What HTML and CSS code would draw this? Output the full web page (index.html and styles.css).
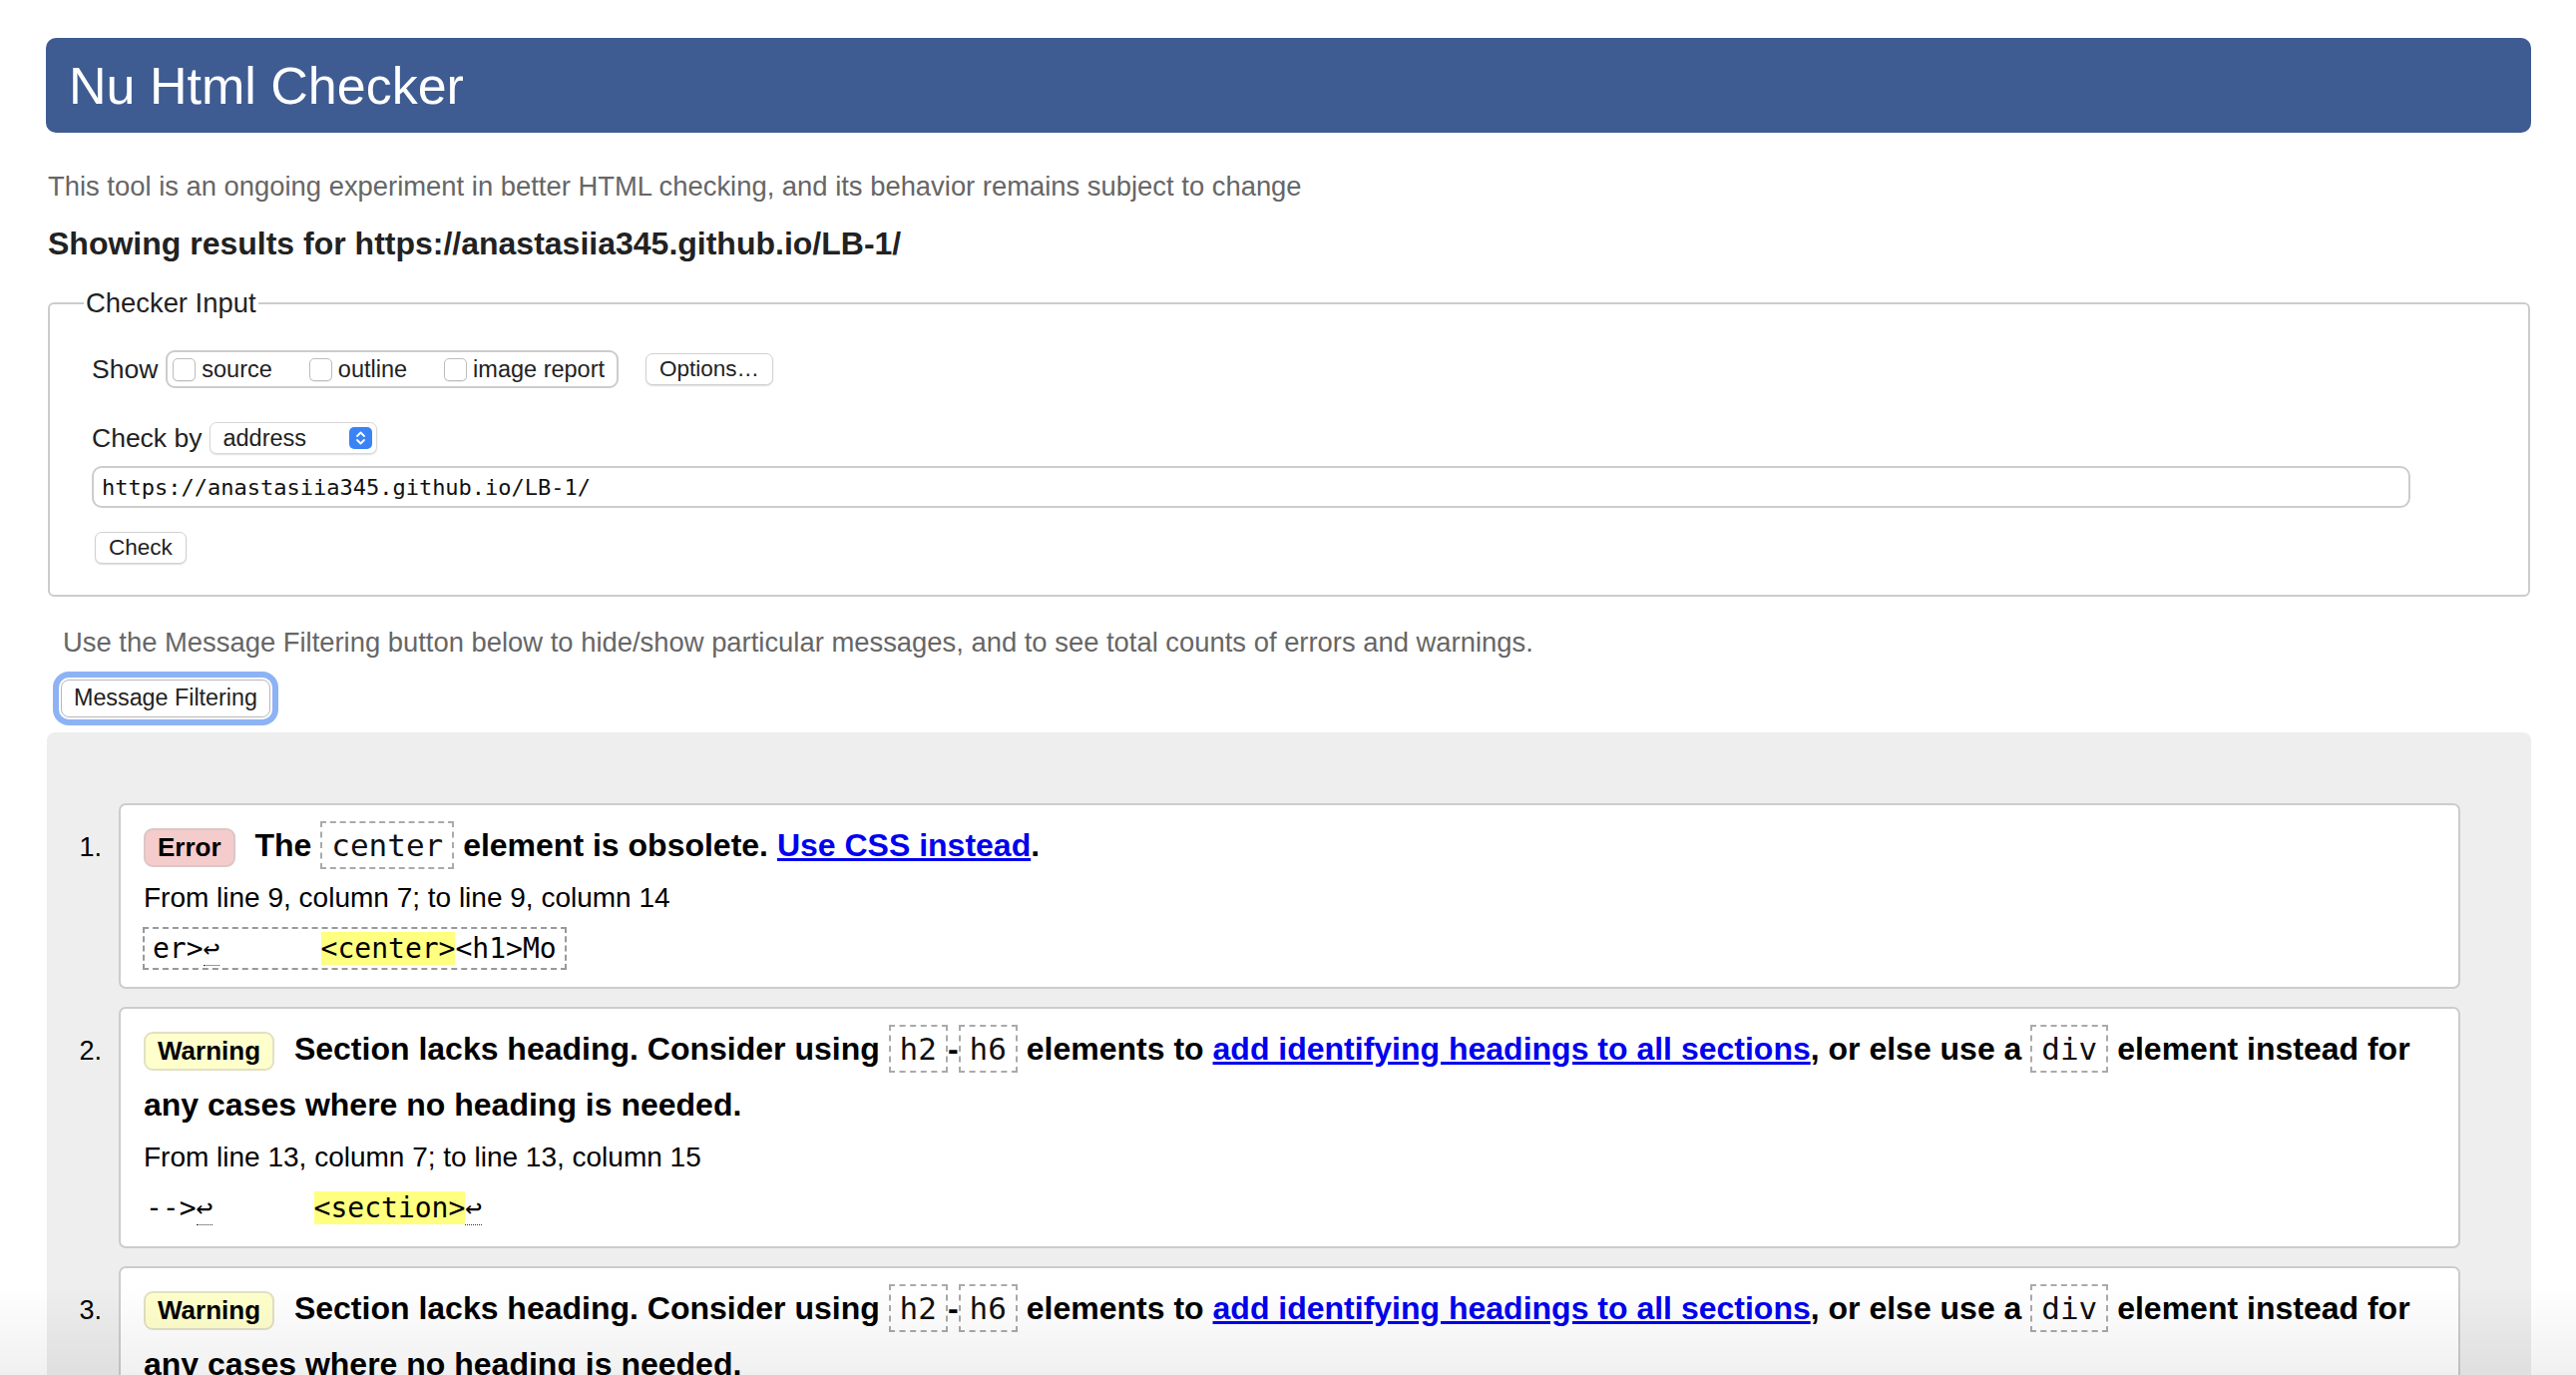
FILE: index.html
```html
<!DOCTYPE html>
<html lang="en">
<head>
<meta charset="utf-8">
<title>Nu Html Checker</title>
<link rel="stylesheet" href="styles.css">
</head>
<body>
<header class="banner"><h1 class="title">Nu Html Checker</h1></header>
<p class="intro">This tool is an ongoing experiment in better HTML checking, and its behavior remains subject to change</p>
<h2 class="results-for">Showing results for https://anastasiia345.github.io/LB-1/</h2>
<form class="checker-form">
  <fieldset class="checker">
    <legend>Checker Input</legend>
    <div class="fs-body">
      <div class="row">
        <span class="label">Show</span>
        <span class="group">
          <label class="opt"><input type="checkbox" class="cb">source</label>
          <label class="opt"><input type="checkbox" class="cb">outline</label>
          <label class="opt"><input type="checkbox" class="cb">image report</label>
        </span>
        <button type="button" class="btn btn-options">Options…</button>
      </div>
      <div class="row row-check">
        <span class="label">Check by</span>
        <span class="select"><span class="select-text">address</span><svg class="stepper" width="23" height="22" viewBox="0 0 23 22"><rect width="23" height="22" rx="5" fill="#3a83f6"/><path d="M8 9 L11.5 5.5 L15 9 M8 13 L11.5 16.5 L15 13" fill="none" stroke="#fff" stroke-width="1.8" stroke-linecap="round" stroke-linejoin="round"/></svg></span>
      </div>
      <input class="url" type="url" value="https://anastasiia345.github.io/LB-1/" readonly>
      <button type="button" class="btn btn-check">Check</button>
    </div>
  </fieldset>
</form>
<p class="filter-note">Use the Message Filtering button below to hide/show particular messages, and to see total counts of errors and warnings.</p>
<button type="button" class="btn btn-filter">Message Filtering</button>
<section class="results">
  <ol class="messages">
    <li class="item">
      <span class="num">1.</span>
      <div class="msg-box">
        <p class="msg"><strong class="badge badge-error">Error</strong> The <code>center</code> element is obsolete. <a href="#">Use CSS instead</a>.</p>
        <p class="loc">From line 9, column 7; to line 9, column 14</p>
        <p class="extract extract-boxed"><code>er&gt;<span class="lf">↩</span>      <mark>&lt;center&gt;</mark>&lt;h1&gt;Mo</code></p>
      </div>
    </li>
    <li class="item">
      <span class="num">2.</span>
      <div class="msg-box">
        <p class="msg"><strong class="badge badge-warning">Warning</strong> Section lacks heading. Consider using <code>h2</code>-<code>h6</code> elements to <a href="#">add identifying headings to all sections</a>, or else use a <code>div</code> element instead for any cases where no heading is needed.</p>
        <p class="loc">From line 13, column 7; to line 13, column 15</p>
        <p class="extract"><code>--&gt;<span class="lf">↩</span>      <mark>&lt;section&gt;</mark><span class="lf">↩</span></code></p>
      </div>
    </li>
    <li class="item">
      <span class="num">3.</span>
      <div class="msg-box">
        <p class="msg"><strong class="badge badge-warning">Warning</strong> Section lacks heading. Consider using <code>h2</code>-<code>h6</code> elements to <a href="#">add identifying headings to all sections</a>, or else use a <code>div</code> element instead for any cases where no heading is needed.</p>
        <p class="loc">From line 15, column 7; to line 15, column 15</p>
        <p class="extract"><code>--&gt;<span class="lf">↩</span>      <mark>&lt;section&gt;</mark><span class="lf">↩</span></code></p>
      </div>
    </li>
  </ol>
</section>
<div class="fade"></div>
</body>
</html>
```

FILE: styles.css
```css
* { box-sizing: border-box; }

html {
  overflow: hidden;
  background: #fff;
}

body {
  margin: 0;
  padding: 38px 45px 0 46px;
  font-family: "Liberation Sans", Arial, Helvetica, sans-serif;
  font-size: 28px;
  color: #000;
  background: #fff;
}

.banner {
  height: 95px;
  background: #3e5c92;
  border-radius: 10px;
  display: flex;
  align-items: center;
  padding-left: 23px;
}

.title {
  margin: 0;
  font-size: 52px;
  font-weight: normal;
  line-height: 1;
  color: #fff;
}

.intro {
  margin: 38px 0 0 2px;
  font-size: 27.4px;
  line-height: 32px;
  color: #666;
}

.results-for {
  margin: 23px 0 0 2px;
  font-size: 32px;
  line-height: 37px;
  font-weight: bold;
  color: #222;
}

.checker-form {
  margin: 25px 1px 0 2px;
}

.checker {
  margin: 0;
  min-width: 0;
  border: 2px solid #ccc;
  border-radius: 6px;
  padding: 31px 42px 31px 42px;
}

.checker legend {
  margin-left: -8px;
  padding: 0 2px;
  font-size: 27.4px;
  line-height: 32px;
  color: #222;
}

.fs-body {
  display: flex;
  flex-direction: column;
  align-items: flex-start;
}

.row {
  display: flex;
  align-items: center;
  height: 38px;
}

.row-check {
  margin-top: 31px;
}

.label {
  font-size: 26.5px;
  color: #222;
  margin-right: 8px;
}

.group {
  display: flex;
  align-items: center;
  gap: 37px;
  height: 38px;
  border: 2px solid #ccc;
  border-radius: 9px;
  padding: 0 12px 0 5px;
}

.opt {
  display: flex;
  align-items: center;
  font-size: 23.5px;
  color: #222;
}

.cb {
  appearance: none;
  -webkit-appearance: none;
  width: 23px;
  height: 23px;
  margin: 0 6px 0 0;
  border: 1px solid #bdbdbd;
  border-radius: 5px;
  background: #fff;
  box-shadow: 0 1px 1px rgba(0, 0, 0, 0.08);
}

.btn {
  font-family: "Liberation Sans", Arial, Helvetica, sans-serif;
  font-size: 22.5px;
  color: #222;
  background: #fff;
  border: 1px solid #d2d2d2;
  border-radius: 7px;
  box-shadow: 0 1px 1.5px rgba(0, 0, 0, 0.14);
  height: 32px;
  padding: 0 12px;
  line-height: 1;
}

.btn-options {
  margin-left: 27px;
  padding: 0 13px;
}

.select {
  display: flex;
  align-items: center;
  justify-content: space-between;
  width: 168px;
  height: 32px;
  padding: 0 4px 0 12px;
  background: #fff;
  border: 1px solid #d8d8d8;
  border-radius: 7px;
  box-shadow: 0 1px 1.5px rgba(0, 0, 0, 0.12);
  font-size: 23.5px;
  color: #222;
}

.stepper {
  display: block;
}

.url {
  margin-top: 9px;
  width: calc(100% - 76px);
  height: 42px;
  border: 2px solid #ccc;
  border-radius: 10px;
  padding: 0 8px;
  font-family: "DejaVu Sans Mono", "Liberation Mono", monospace;
  font-size: 22px;
  color: #111;
  background: #fff;
  outline: none;
}

.btn-check {
  margin: 24px 0 0 3px;
  padding: 0 13px;
}

.filter-note {
  margin: 30px 0 0 17px;
  font-size: 27.4px;
  line-height: 32px;
  color: #666;
}

.btn-filter {
  display: block;
  margin: 21px 0 0 15px;
  height: 38px;
  padding: 0 12px;
  font-size: 23.3px;
  border: 1px solid #b8b8b8;
  border-radius: 8px;
  box-shadow: 0 0 0 2px #fff, 0 0 0 8px #8db3f5;
}

.results {
  margin: 15px 0 0 1px;
  background: #eee;
  border-radius: 8px 8px 0 0;
  padding: 71px 71px 40px 0;
}

.messages {
  list-style: none;
  margin: 0;
  padding: 0;
  display: flex;
  flex-direction: column;
  gap: 18px;
}

.item {
  display: flex;
  align-items: flex-start;
}

.num {
  flex: none;
  width: 72px;
  padding-right: 17px;
  margin-top: 16px;
  text-align: right;
  font-size: 27px;
  line-height: 56px;
}

.msg-box {
  flex: 1;
  min-width: 0;
  background: #fff;
  border: 2px solid #ccc;
  border-radius: 7px;
  padding: 12px 23px 17px 23px;
}

.msg {
  margin: 0;
  font-size: 32px;
  font-weight: bold;
  line-height: 56px;
}

.badge {
  display: inline-block;
  vertical-align: middle;
  font-size: 26px;
  line-height: 35px;
  padding: 0 12px;
  border: 2px solid;
  border-radius: 9px;
  margin-right: 11px;
}

.badge-error {
  background: #f5cccc;
  border-color: #dcc6c6;
}

.badge-warning {
  background: #ffffcc;
  border-color: #e2e0c4;
}

.msg code {
  font-family: "DejaVu Sans Mono", "Liberation Mono", monospace;
  font-size: 31px;
  font-weight: normal;
  color: #111;
  padding: 4px 9px;
  border: 2px dashed #aaa;
}

.msg a {
  color: #0000ee;
  text-decoration: underline;
}

.loc {
  margin: 8px 0 0;
  font-size: 28px;
  line-height: 33px;
}

.extract {
  margin: 13px 0 0;
}

.extract code {
  display: inline-block;
  font-family: "DejaVu Sans Mono", "Liberation Mono", monospace;
  font-size: 28px;
  line-height: 33px;
  padding: 3px 0;
  border: 2px solid transparent;
  white-space: pre;
  color: #000;
}

.extract-boxed code {
  margin-left: -1px;
  padding: 3px 8px;
  border: 2px dashed #999;
}

.extract mark {
  background: #ffff80;
  color: inherit;
}

.lf {
  border-bottom: 1px dotted #333;
}

.fade {
  position: fixed;
  left: 0;
  right: 0;
  bottom: 0;
  height: 90px;
  background: linear-gradient(rgba(0, 0, 0, 0), rgba(0, 0, 0, 0.06));
  pointer-events: none;
}
```
